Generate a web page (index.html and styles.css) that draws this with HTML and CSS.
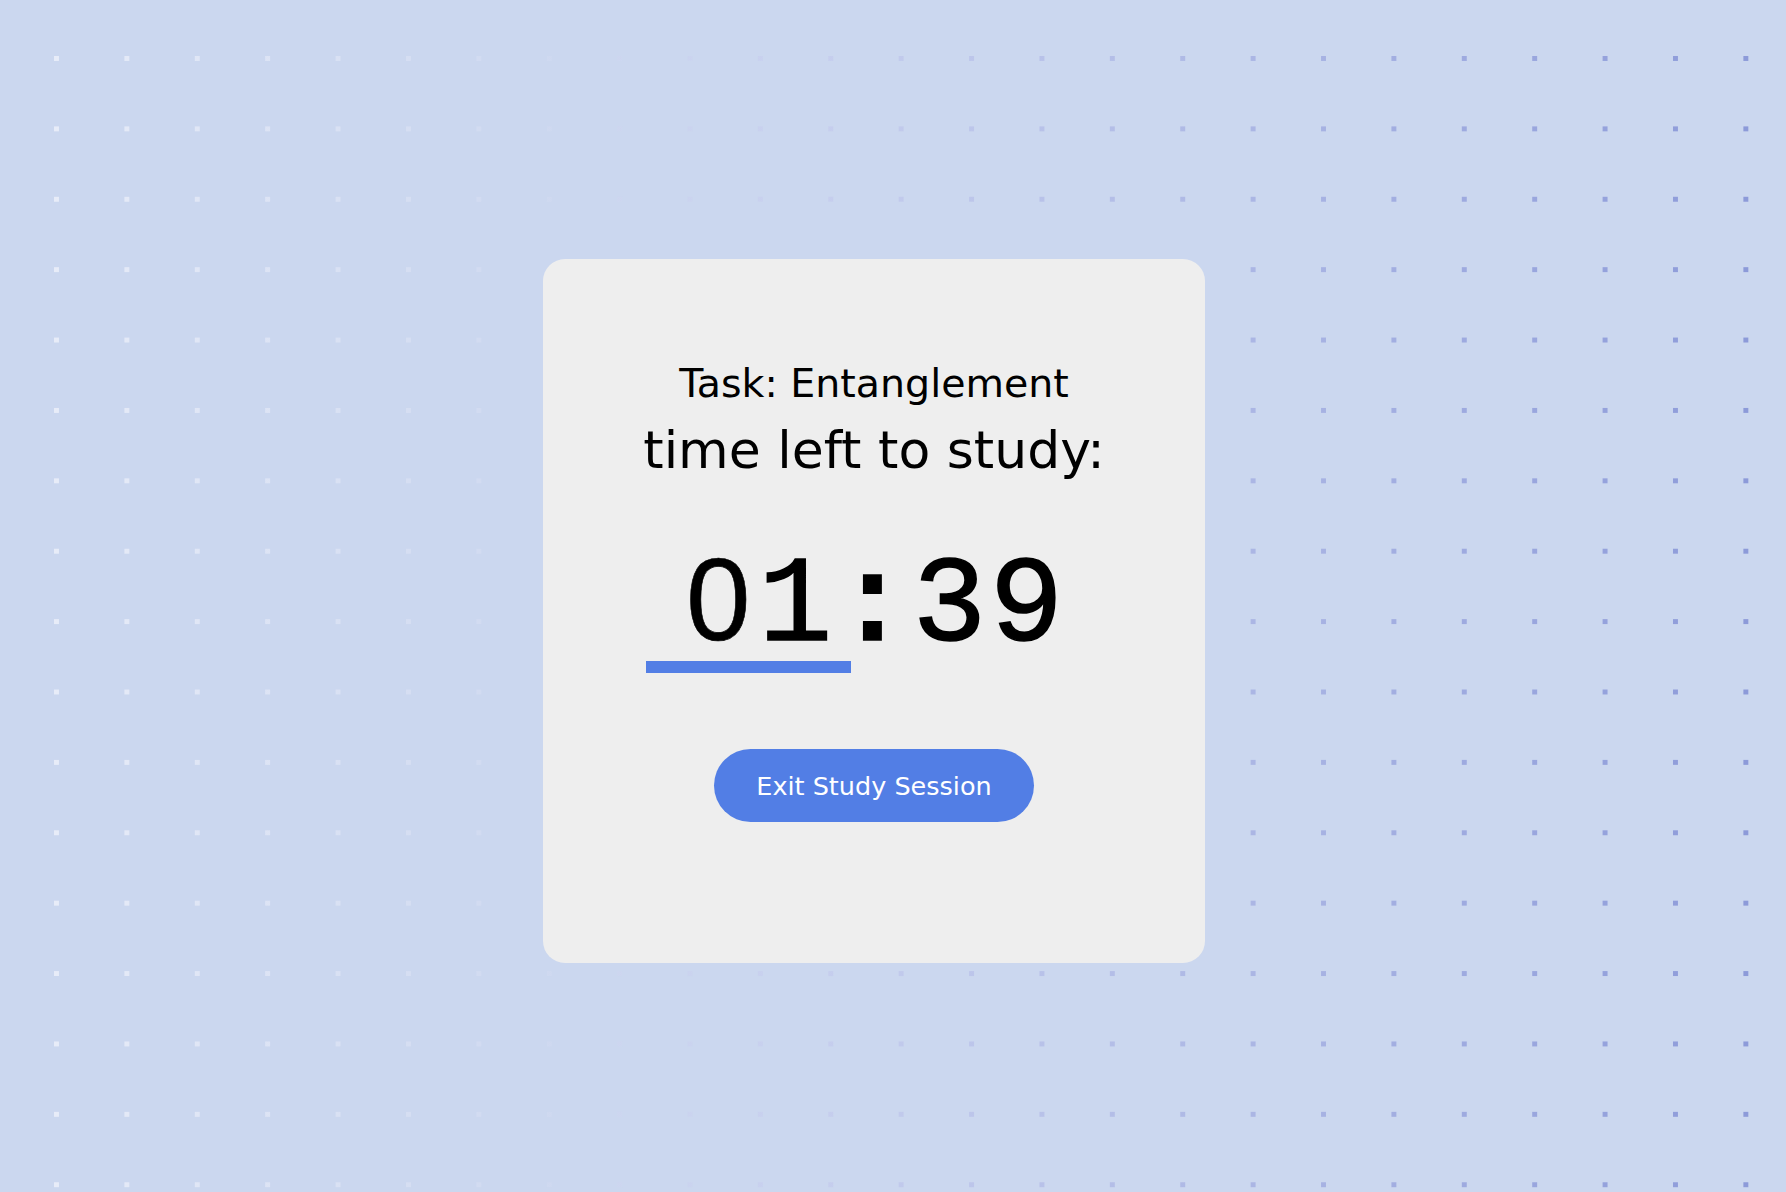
FILE: index.html
```html
<!DOCTYPE html>
<html>
<head>
<meta charset="utf-8">
<link rel="stylesheet" href="styles.css">
</head>
<body>
<div class="dots"></div>
<main class="stage">
  <section class="card">
    <h2 class="task">Task: Entanglement</h2>
    <h1 class="label">time left to study:</h1>
    <div class="timer">
      <div class="digits"><span class="zero">0</span>1<span class="colon">:</span>39</div>
      <div class="track"><div class="progress" style="width:45%"></div></div>
    </div>
    <button class="exit">Exit Study Session</button>
  </section>
</main>
</body>
</html>
```
FILE: styles.css
```css
html, body {
  margin: 0;
  height: 100%;
}
body {
  background: #cbd7ef;
  position: relative;
  overflow: hidden;
  font-family: "DejaVu Sans", sans-serif;
}
.dots {
  position: absolute;
  inset: 0;
  background: linear-gradient(to right, #eaeef9 0%, #cfd9f0 30%, #c7cfee 45%, #8a98d8 100%);
  -webkit-mask-image: conic-gradient(at 5px 5px, transparent 75%, #000 0);
  mask-image: conic-gradient(at 5px 5px, transparent 75%, #000 0);
  -webkit-mask-size: 70.4px 70.4px;
  mask-size: 70.4px 70.4px;
  -webkit-mask-position: 54px 56px;
  mask-position: 54px 56px;
}
.stage {
  position: relative;
  padding: 259px 0 0 543px;
}
.card {
  width: 662px;
  height: 704px;
  box-sizing: border-box;
  background: #eeeeee;
  border-radius: 22px;
  display: flex;
  flex-direction: column;
  align-items: center;
  padding-top: 102px;
}
.task {
  margin: 0;
  font-size: 39.5px;
  line-height: 44px;
  font-weight: 500;
  color: #000;
  white-space: nowrap;
}
.label {
  margin: 15px 0 0;
  font-size: 52px;
  line-height: 60px;
  font-weight: 500;
  color: #000;
  white-space: nowrap;
}
.timer {
  margin-top: 70px;
  width: 457px;
}
.digits {
  font-family: "Liberation Mono", monospace;
  font-size: 123px;
  line-height: 100px;
  letter-spacing: 3.2px;
  text-align: center;
  color: #000;
  -webkit-text-stroke: 1.6px #000;
  white-space: nowrap;
}
.zero {
  font-family: "Liberation Sans", sans-serif;
  font-size: 116px;
  margin-left: 4.6px;
  letter-spacing: 7.9px;
  -webkit-text-stroke: 0.6px #000;
}
.colon {
  font-weight: 700;
}
.track {
  margin-top: 3px;
  height: 12px;
}
.progress {
  height: 12px;
  background: #527ee5;
}
.exit {
  margin-top: 76px;
  width: 320px;
  height: 73px;
  border: none;
  border-radius: 37px;
  background: #527ee5;
  color: #fff;
  font-family: "DejaVu Sans", sans-serif;
  font-size: 25.5px;
  font-weight: 500;
  padding: 0;
}
```
